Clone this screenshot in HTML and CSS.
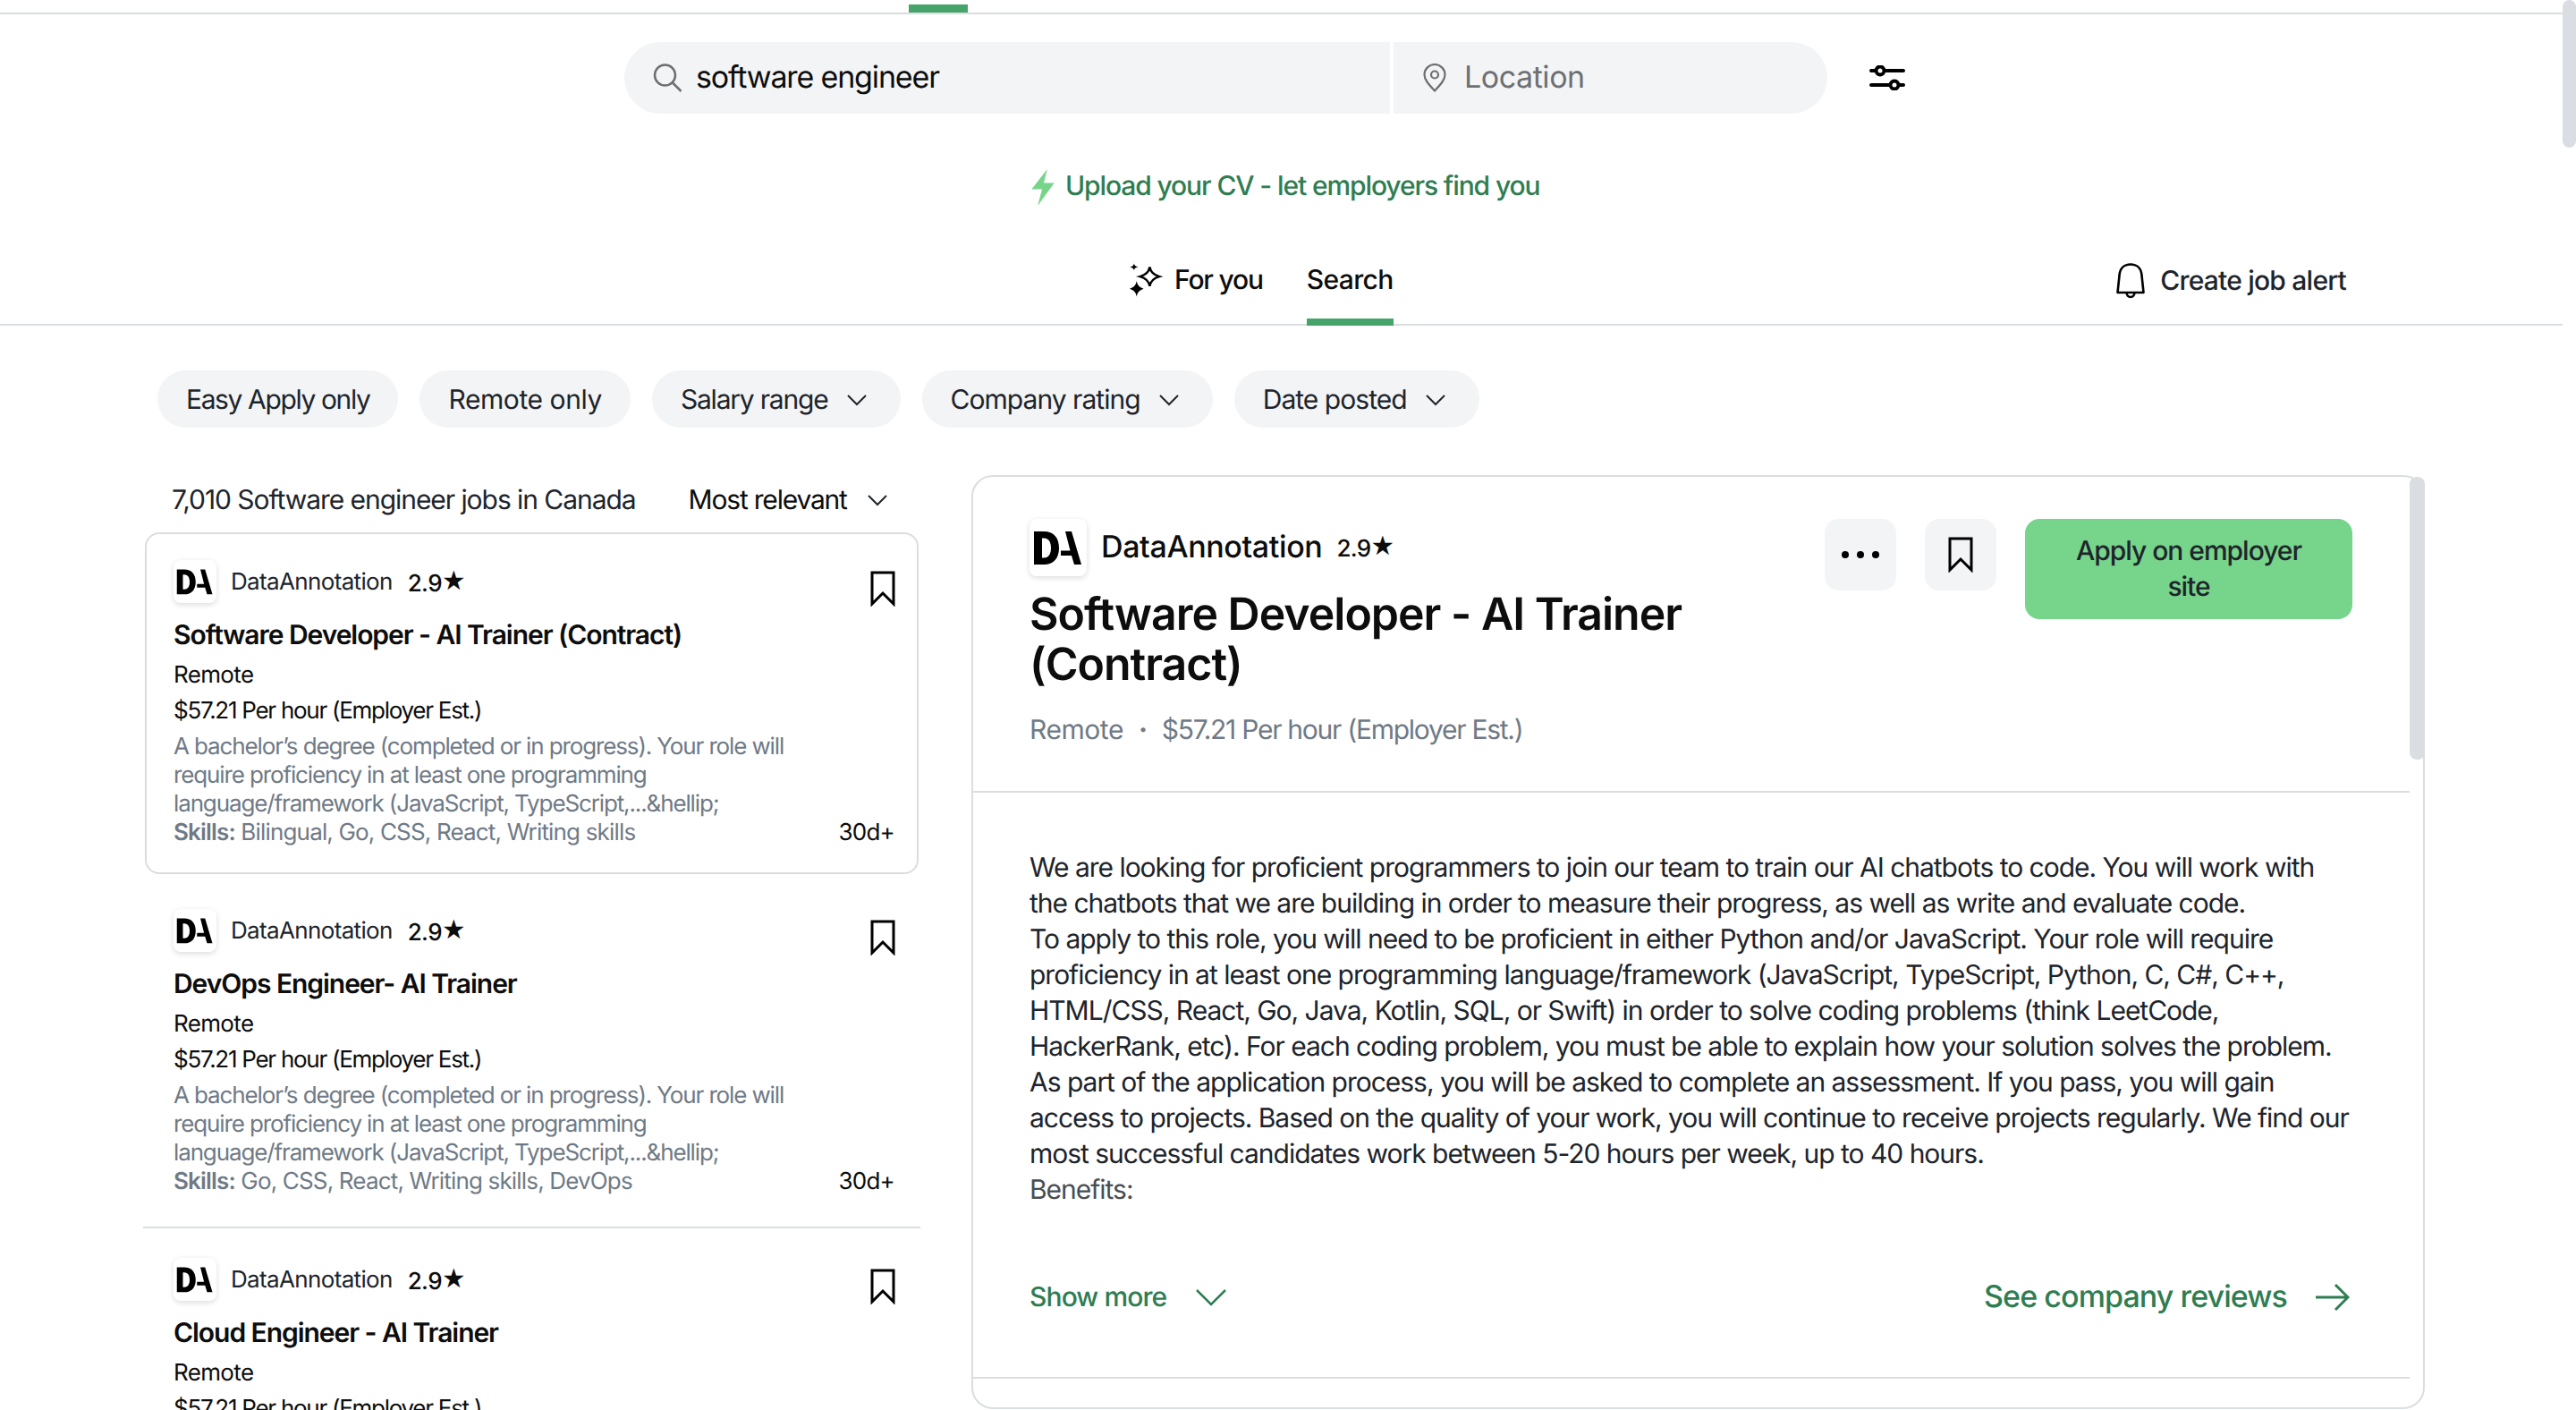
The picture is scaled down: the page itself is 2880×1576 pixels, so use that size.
FILE: index.html
```html
<!DOCTYPE html>
<html lang="en">
<head>
<meta charset="utf-8">
<title>Software engineer jobs</title>
<link rel="stylesheet" href="styles.css">
</head>
<body>
<svg class="defs" width="0" height="0" aria-hidden="true">
  <symbol id="i-logo" viewBox="0 0 64 64"><path fill="#000" fill-rule="evenodd" d="M5 14h11c11 0 17 7 17 18.500S27 51 16 51H5zm9 7.500v22h2c6 0 8-5 8-11s-2-11-8-11z"/><path fill="#000" d="M40 14h7l11 37h-8l-3-10H35v-5.500h10.500z"/></symbol>
  <symbol id="i-bookmark" viewBox="0 0 28 40"><path fill="none" stroke="#000" stroke-width="3" stroke-linejoin="miter" d="M2 2h24v35L14 25 2 37z"/></symbol>
  <symbol id="i-chevron" viewBox="0 0 24 14"><path fill="none" stroke="currentColor" stroke-width="2" d="M2 2l10 10L22 2"/></symbol>
</svg>

<div class="app">
  <header class="top-rule"><span class="top-rule-mark"></span></header>

  <div class="search-row">
    <div class="search-box">
      <div class="search-field search-field--query">
        <svg class="search-icon" viewBox="0 0 32 32"><circle cx="13" cy="13" r="11.500" fill="none" stroke="#6e6f73" stroke-width="2.500"/><path d="M21.500 21.500L31 31" stroke="#6e6f73" stroke-width="2.500"/></svg>
        <span class="search-value">software engineer</span>
      </div>
      <div class="search-field search-field--location">
        <svg class="pin-icon" viewBox="0 0 28 32"><path fill="none" stroke="#6e6f73" stroke-width="2.200" d="M14 30.500C7 23 2.500 18 2.500 12.500a11.500 11.500 0 0123 0C25.500 18 21 23 14 30.500z"/><circle cx="14" cy="12.500" r="4" fill="none" stroke="#6e6f73" stroke-width="2.200"/></svg>
        <span class="search-placeholder">Location</span>
      </div>
    </div>
    <svg class="filter-icon" viewBox="0 0 40 28"><path d="M2 6h36M2 22h36" stroke="#000" stroke-width="4" stroke-linecap="round"/><circle cx="12" cy="6" r="4.500" fill="#fff" stroke="#000" stroke-width="4"/><circle cx="28" cy="22" r="4.500" fill="#fff" stroke="#000" stroke-width="4"/></svg>
  </div>

  <div class="upload-row">
    <svg class="bolt-icon" viewBox="0 0 26 42"><path fill="#77d48b" d="M18 0L14 16h12L7 42l5-19H0z"/></svg>
    <span class="upload-text">Upload your CV - let employers find you</span>
  </div>

  <nav class="tabs">
    <div class="tab">
      <svg class="spark-icon" viewBox="0 0 38 38"><path fill="none" stroke="#000" stroke-width="2.600" d="M23 4c1 6 4 9 11 11-7 2-10 5-11 11-1-6-4-9-11-11 7-2 10-5 11-11z"/><path fill="#000" d="M8 20c1 5 3 7 8 9-5 2-7 4-8 9-1-5-3-7-8-9 5-2 7-4 8-9zM5 0c.5 2.500 1.800 3.500 5 4-3.200.5-4.500 1.500-5 4-.5-2.500-1.800-3.500-5-4 3.200-.5 4.500-1.500 5-4z"/></svg>
      <span class="tab-label">For you</span>
    </div>
    <div class="tab tab--active">Search</div>
    <div class="alert">
      <svg class="bell-icon" viewBox="0 0 32 40"><path fill="none" stroke="#000" stroke-width="2.600" stroke-linejoin="round" d="M1.500 33L3.500 14C4 6 9 1.500 16 1.500S28 6 28.500 14l2 19zM11.500 33c0 3 2 5 4.500 5s4.500-2 4.500-5"/></svg>
      <span>Create job alert</span>
    </div>
  </nav>

  <div class="filters">
    <button class="chip chip--tight">Easy Apply only</button>
    <button class="chip chip--loose">Remote only</button>
    <button class="chip chip--menu">Salary range<svg class="chevron"><use href="#i-chevron"/></svg></button>
    <button class="chip chip--menu chip--wide">Company rating<svg class="chevron"><use href="#i-chevron"/></svg></button>
    <button class="chip chip--menu chip--wide">Date posted<svg class="chevron"><use href="#i-chevron"/></svg></button>
  </div>

  <main class="content">
    <section class="list">
      <div class="list-head">
        <span class="result-count">7,010 Software engineer jobs in Canada</span>
        <span class="sort">Most relevant<svg class="chevron"><use href="#i-chevron"/></svg></span>
      </div>

      <article class="job job--selected">
        <div class="job-top">
          <svg class="logo"><use href="#i-logo"/></svg>
          <span class="job-company">DataAnnotation</span>
          <span class="job-rating">2.9<i class="star">★</i></span>
          <svg class="job-save"><use href="#i-bookmark"/></svg>
        </div>
        <h3 class="job-title">Software Developer - AI Trainer (Contract)</h3>
        <div class="job-line job-line--loc">Remote</div>
        <div class="job-line job-line--pay">$57.21 Per hour (Employer Est.)</div>
        <p class="job-desc">A bachelor’s degree (completed or in progress). Your role will<br>require proficiency in at least one programming<br>language/framework (JavaScript, TypeScript,...&amp;hellip;</p>
        <div class="job-foot"><span class="job-skills"><b>Skills:</b> Bilingual, Go, CSS, React, Writing skills</span><span class="job-age">30d+</span></div>
      </article>

      <article class="job job--rule">
        <div class="job-top">
          <svg class="logo"><use href="#i-logo"/></svg>
          <span class="job-company">DataAnnotation</span>
          <span class="job-rating">2.9<i class="star">★</i></span>
          <svg class="job-save"><use href="#i-bookmark"/></svg>
        </div>
        <h3 class="job-title">DevOps Engineer- AI Trainer</h3>
        <div class="job-line job-line--loc">Remote</div>
        <div class="job-line job-line--pay">$57.21 Per hour (Employer Est.)</div>
        <p class="job-desc">A bachelor’s degree (completed or in progress). Your role will<br>require proficiency in at least one programming<br>language/framework (JavaScript, TypeScript,...&amp;hellip;</p>
        <div class="job-foot"><span class="job-skills"><b>Skills:</b> Go, CSS, React, Writing skills, DevOps</span><span class="job-age">30d+</span></div>
      </article>

      <article class="job">
        <div class="job-top">
          <svg class="logo"><use href="#i-logo"/></svg>
          <span class="job-company">DataAnnotation</span>
          <span class="job-rating">2.9<i class="star">★</i></span>
          <svg class="job-save"><use href="#i-bookmark"/></svg>
        </div>
        <h3 class="job-title">Cloud Engineer - AI Trainer</h3>
        <div class="job-line job-line--loc">Remote</div>
        <div class="job-line job-line--pay">$57.21 Per hour (Employer Est.)</div>
      </article>
    </section>

    <section class="detail">
      <span class="detail-scroll"></span>
      <header class="detail-head">
        <div class="detail-info">
          <div class="detail-company">
            <svg class="logo logo--large"><use href="#i-logo"/></svg>
            <span class="detail-name">DataAnnotation</span>
            <span class="detail-rating">2.9<i class="star">★</i></span>
          </div>
          <h1 class="detail-title">Software Developer - AI Trainer (Contract)</h1>
          <div class="detail-meta"><span class="meta-loc">Remote</span><span class="meta-dot">·</span><span>$57.21 Per hour (Employer Est.)</span></div>
        </div>
        <div class="detail-actions">
          <button class="square-btn"><svg class="dots" viewBox="0 0 42 10"><circle cx="4" cy="5" r="4"/><circle cx="21" cy="5" r="4"/><circle cx="38" cy="5" r="4"/></svg></button>
          <button class="square-btn"><svg class="btn-save"><use href="#i-bookmark"/></svg></button>
          <button class="apply-btn">Apply on employer site</button>
        </div>
      </header>
      <div class="detail-body">
        <p>We are looking for proficient programmers to join our team to train our AI chatbots to code. You will work with<br>the chatbots that we are building in order to measure their progress, as well as write and evaluate code.<br>To apply to this role, you will need to be proficient in either Python and/or JavaScript. Your role will require<br>proficiency in at least one programming language/framework (JavaScript, TypeScript, Python, C, C#, C++,<br>HTML/CSS, React, Go, Java, Kotlin, SQL, or Swift) in order to solve coding problems (think LeetCode,<br>HackerRank, etc). For each coding problem, you must be able to explain how your solution solves the problem.<br>As part of the application process, you will be asked to complete an assessment. If you pass, you will gain<br>access to projects. Based on the quality of your work, you will continue to receive projects regularly. We find our<br>most successful candidates work between 5-20 hours per week, up to 40 hours.<br><span class="fade">Benefits:</span></p>
        <div class="detail-links">
          <span class="show-more">Show more<svg class="more-chevron" viewBox="0 0 36 22"><path fill="none" stroke="currentColor" stroke-width="2.500" d="M2 3l16 16L34 3"/></svg></span>
          <span class="reviews">See company reviews<svg class="arrow" viewBox="0 0 38 32"><path fill="none" stroke="currentColor" stroke-width="3" d="M0 16h36M22 2l14 14-14 14"/></svg></span>
        </div>
      </div>
    </section>
  </main>

  <span class="page-scroll"></span>
</div>
</body>
</html>
```

FILE: styles.css
```css
* { box-sizing: border-box; }
html, body { margin: 0; padding: 0; height: 100%; overflow: hidden; background: #fff; }
body { font-family: Inter, "Liberation Sans", sans-serif; color: #0d0d0d; letter-spacing: -0.04em; text-rendering: geometricPrecision; }
.defs { display: block; height: 0; }
.app { position: relative; width: 2880px; height: 1576px; overflow: hidden; display: flex; flex-direction: column; }
button { font: inherit; letter-spacing: inherit; text-rendering: inherit; border: 0; padding: 0; color: inherit; }
h1, h3, p { margin: 0; }
.star { font-style: normal; font-family: "DejaVu Sans", sans-serif; font-size: 1.14em; letter-spacing: 0; position: relative; top: -2px; }

.top-rule { height: 16px; margin-right: 15px; border-bottom: 2px solid #dadde1; padding: 5px 0 0 1016px; flex: none; }
.top-rule-mark { display: block; width: 66px; height: 9px; background: #46a46b; }

.search-row { display: flex; align-items: center; padding: 31px 0 0 698px; flex: none; }
.search-box { display: flex; width: 1345px; height: 80px; border-radius: 40px; overflow: hidden; gap: 4px; }
.search-field { background: #f3f4f5; display: flex; align-items: center; height: 100%; }
.search-field--query { width: 856px; padding-left: 32px; gap: 15px; }
.search-field--location { flex: 1; padding-left: 32px; gap: 19px; }
.search-icon { width: 33px; height: 32px; }
.pin-icon { width: 28px; height: 32px; }
.search-value { font-size: 34px; color: #0d0d0d; padding-bottom: 2px; letter-spacing: -0.034em; }
.search-placeholder { font-size: 34px; color: #6e6f73; letter-spacing: -0.013em; padding-bottom: 2px; }
.filter-icon { width: 40px; height: 28px; margin-left: 47px; }

.upload-row { display: flex; align-items: center; gap: 12px; padding: 58px 0 0 1153px; flex: none; }
.bolt-icon { width: 26px; height: 41px; margin-top: 4px; }
.upload-text { font-size: 30px; font-weight: 500; color: #2f7d51; letter-spacing: -0.037em; }

.tabs { display: flex; align-items: stretch; height: 108px; margin-top: 26px; padding: 0 242px 0 1263px; margin-right: 15px; border-bottom: 2px solid #dadde1; font-size: 30px; font-weight: 500; flex: none; }
.tab { display: flex; align-items: center; gap: 13px; padding-top: 13px; height: 108px; border-bottom: 8px solid transparent; }
.tab-label { letter-spacing: -0.04em; }
.tab--active { margin-left: 49px; border-bottom-color: #46a46b; }
.spark-icon { width: 37px; height: 38px; }
.alert { margin-left: auto; display: flex; align-items: center; gap: 17px; color: #20242b; padding-top: 10px; height: 106px; letter-spacing: -0.026em; }
.bell-icon { width: 32px; height: 40px; }

.filters { display: flex; gap: 24px; padding: 50px 0 0 176px; flex: none; }
.chip { display: flex; align-items: center; gap: 20px; height: 64px; padding: 1px 32px 0; border-radius: 32px; background: #f3f4f5; font-size: 30px; color: #20242b; letter-spacing: -0.04em; }
.chip--tight { letter-spacing: -0.046em; }
.chip--loose { letter-spacing: -0.014em; }
.chip--wide { letter-spacing: -0.032em; }
.chip--menu { padding-right: 37px; }
.chevron { width: 24px; height: 14px; color: #20242b; }

.content { display: flex; align-items: flex-start; gap: 59px; padding: 53px 0 0 162px; flex: none; }

.list { width: 865px; flex: none; }
.list-head { display: flex; align-items: center; height: 64px; padding: 0 0 9px 30px; font-size: 30px; }
.result-count { color: #20242b; letter-spacing: -0.035em; }
.sort { display: flex; align-items: center; gap: 22px; margin-left: 59px; letter-spacing: -0.04em; }

.job { padding: 33px 27px 34px 32px; }
.job--selected { border: 2px solid #dcdcdc; border-radius: 16px; padding: 29px 25px 28px 30px; margin-bottom: 6px; }
.job--rule { border-bottom: 2px solid #dadde1; margin: 0 -2px; padding-left: 34px; padding-right: 29px; }
.job-top { display: flex; align-items: flex-start; height: 48px; font-size: 26px; position: relative; }
.logo { width: 48px; height: 48px; flex: none; border-radius: 8px; box-shadow: 0 2px 6px rgba(0,0,0,.14); background: #fff; }
.job-company { margin-left: 16px; margin-top: 1px; line-height: 48px; height: 48px; color: #20242b; letter-spacing: -0.025em; }
.job-rating { margin-left: 17px; margin-top: 1px; line-height: 48px; font-weight: 500; }
.job-save { width: 28px; height: 40px; margin-left: auto; margin-top: 12px; margin-right: -1px; }
.job-title { font-size: 30px; line-height: 40px; font-weight: 600; margin-top: 16px; letter-spacing: -0.035em; }
.job-line { font-size: 26px; line-height: 40px; color: #0d0d0d; }
.job-line--loc { margin-top: 5px; letter-spacing: -0.025em; }
.job-line--pay { letter-spacing: -0.049em; }
.job-desc { font-size: 26px; line-height: 32px; color: #6f7a86; margin-top: 4px; letter-spacing: -0.0434em; }
.job-foot { display: flex; justify-content: space-between; font-size: 26px; line-height: 32px; }
.job-skills { color: #6f7a86; letter-spacing: -0.032em; }
.job-skills b { font-weight: 600; }
.job-age { color: #0d0d0d; letter-spacing: -0.03em; }

.detail { position: relative; width: 1625px; height: 1044px; flex: none; border: 2px solid #dadde1; border-radius: 24px; padding-right: 15px; }
.detail-scroll { position: absolute; right: -2px; top: 0; width: 17px; height: 316px; background: #dadde1; border-radius: 8px; }
.detail-head { display: flex; justify-content: space-between; height: 353px; padding: 47px 64px 0 63px; border-bottom: 2px solid #dadde1; }
.detail-info { width: 780px; }
.detail-company { display: flex; align-items: center; }
.logo--large { width: 64px; height: 64px; }
.detail-name { font-size: 34px; font-weight: 500; margin-left: 16px; margin-top: -1px; letter-spacing: -0.011em; }
.detail-rating { font-size: 26px; font-weight: 500; margin-left: 16px; margin-top: -1px; }
.detail-title { font-size: 50px; line-height: 56px; font-weight: 600; margin-top: 15px; letter-spacing: -0.02em; }
.detail-meta { display: flex; gap: 17px; font-size: 30px; line-height: 40px; color: #6f7a86; margin-top: 25px; letter-spacing: -0.042em; }
.meta-loc { letter-spacing: -0.015em; }
.meta-dot { font-weight: 700; }
.detail-actions { display: flex; gap: 32px; align-items: flex-start; }
.square-btn { width: 80px; height: 80px; border-radius: 16px; background: #f3f4f5; display: flex; align-items: center; justify-content: center; }
.dots { width: 42px; height: 10px; }
.btn-save { width: 28px; height: 40px; }
.apply-btn { width: 366px; height: 112px; border-radius: 16px; background: #77d48b; font-size: 30px; line-height: 40px; font-weight: 500; color: #20242b; padding: 0 40px; letter-spacing: -0.034em; }

.detail-body { height: 655px; padding: 64px 67px 0 63px; border-bottom: 2px solid #dadde1; }
.detail-body p { font-size: 30px; line-height: 40px; color: #20242b; height: 399px; white-space: nowrap; letter-spacing: -0.034em; }
.fade { color: #4a4d52; }
.detail-links { display: flex; justify-content: space-between; align-items: center; margin-top: 80px; color: #2f7d51; }
.show-more { display: flex; align-items: center; gap: 32px; font-size: 30px; font-weight: 500; letter-spacing: -0.03em; }
.more-chevron { width: 36px; height: 22px; }
.reviews { display: flex; align-items: center; gap: 32px; font-size: 34px; font-weight: 500; letter-spacing: -0.027em; }
.arrow { width: 38px; height: 32px; }

.page-scroll { position: absolute; right: 0; top: 0; width: 15px; height: 165px; background: #dadde1; border-radius: 8px; }
```
